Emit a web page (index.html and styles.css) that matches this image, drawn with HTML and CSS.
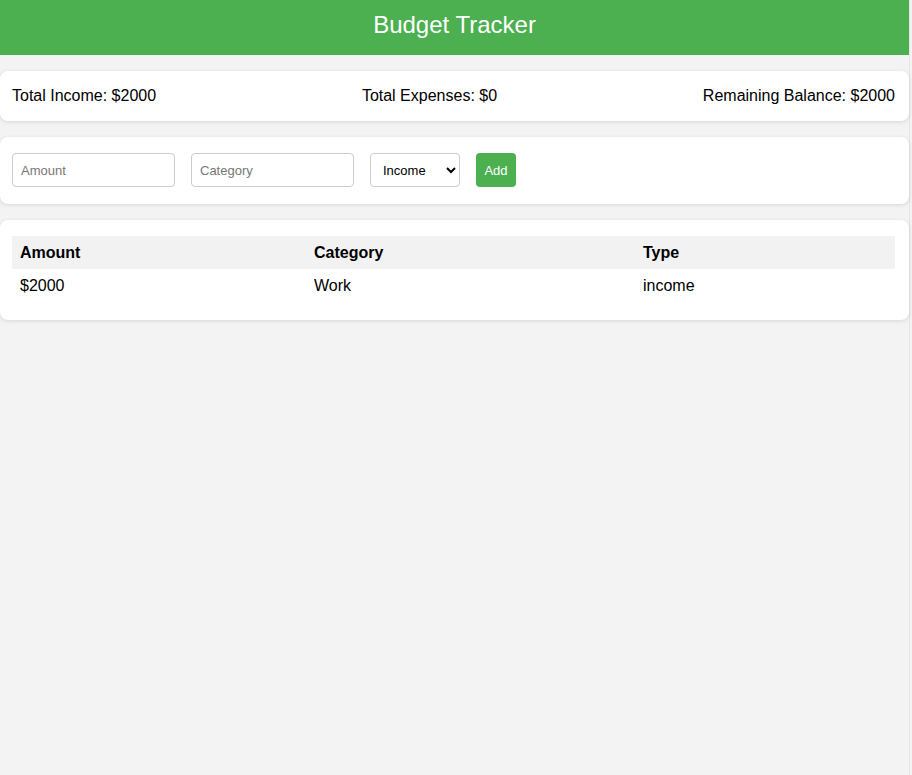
FILE: index.html
```html
<!DOCTYPE html>
<html lang="en">
<head>
<meta charset="utf-8">
<title>Budget Tracker</title>
<link rel="stylesheet" href="styles.css">
</head>
<body>
<div class="page">
  <header class="topbar"><h1>Budget Tracker</h1></header>
  <main class="content">
    <section class="card summary">
      <span>Total Income: $2000</span>
      <span>Total Expenses: $0</span>
      <span>Remaining Balance: $2000</span>
    </section>
    <section class="card form">
      <input class="field" type="text" placeholder="Amount">
      <input class="field" type="text" placeholder="Category">
      <select class="select">
        <option>Income</option>
        <option>Expense</option>
      </select>
      <button class="add">Add</button>
    </section>
    <section class="card list">
      <table class="table">
        <thead>
          <tr><th class="c1">Amount</th><th class="c2">Category</th><th class="c3">Type</th></tr>
        </thead>
        <tbody>
          <tr><td>$2000</td><td>Work</td><td>income</td></tr>
        </tbody>
      </table>
    </section>
  </main>
</div>
</body>
</html>
```
FILE: styles.css
```css
html, body {
  margin: 0;
  padding: 0;
  background: #f3f3f3;
  font-family: "Liberation Sans", Arial, sans-serif;
  color: #000;
}
.page {
  width: 910px;
  min-height: 775px;
  border-right: 1px solid #e6e6e6;
  box-sizing: border-box;
}
.topbar {
  background: #4caf50;
  height: 55px;
  box-sizing: border-box;
  padding-bottom: 6px;
  display: flex;
  align-items: center;
  justify-content: center;
}
.topbar h1 {
  margin: 0;
  color: #fff;
  font-size: 24px;
  font-weight: normal;
  line-height: 28px;
}
.content {
  padding-top: 16px;
  display: flex;
  flex-direction: column;
  gap: 16px;
}
.card {
  background: #fff;
  border-radius: 8px;
  box-shadow: 0 1px 4px rgba(0,0,0,0.12);
}
.summary {
  height: 50px;
  box-sizing: border-box;
  padding: 0 14px 0 12px;
  display: flex;
  align-items: center;
  justify-content: space-between;
  font-size: 16px;
}
.form {
  height: 67px;
  box-sizing: border-box;
  padding: 16px 12px;
  display: flex;
  gap: 16px;
}
.field {
  width: 163px;
  height: 34px;
  box-sizing: border-box;
  border: 1px solid #ccc;
  border-radius: 4px;
  padding: 0 8px;
  font-family: "Liberation Sans", Arial, sans-serif;
  font-size: 13px;
  margin: 0;
}
.field::placeholder {
  color: #777;
}
.select {
  width: 90px;
  height: 34px;
  box-sizing: border-box;
  border: 1px solid #ccc;
  border-radius: 4px;
  background: #fff;
  padding: 0 8px;
  font-family: "Liberation Sans", Arial, sans-serif;
  font-size: 13px;
  color: #000;
  margin: 0;
}
.add {
  width: 40px;
  height: 34px;
  border: none;
  border-radius: 4px;
  background: #4caf50;
  color: #fff;
  font-family: "Liberation Sans", Arial, sans-serif;
  font-size: 13px;
  padding: 0;
  margin: 0;
}
.list {
  padding: 16px 14px 17px 12px;
}
.table {
  width: 100%;
  border-collapse: collapse;
  font-size: 16px;
}
.table th {
  background: #f2f2f2;
  text-align: left;
  font-weight: bold;
  padding: 0 8px;
  height: 33px;
}
.table td {
  padding: 0 8px;
  height: 34px;
}
.c1 { width: 294px; box-sizing: border-box; }
.c2 { width: 329px; box-sizing: border-box; }
.c3 { width: 260px; box-sizing: border-box; }
```
